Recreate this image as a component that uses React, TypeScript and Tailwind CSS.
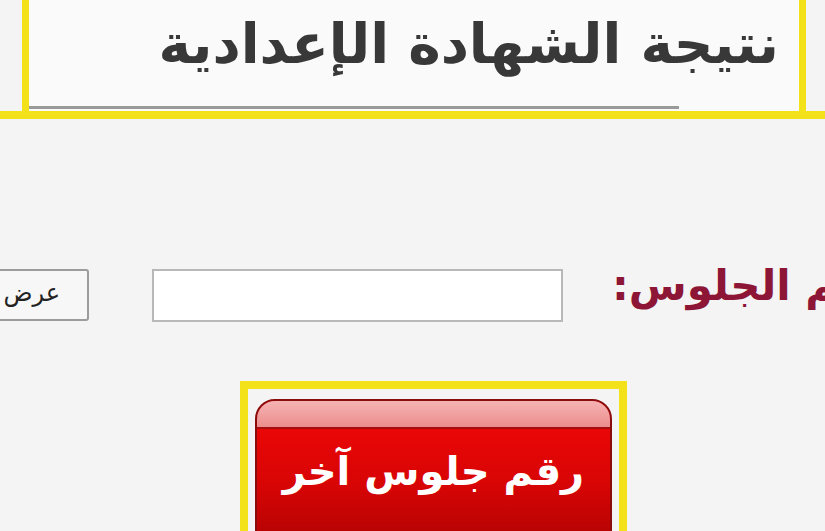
export default function App() {
  return (
    <div
      className="w-[825px] h-[531px] overflow-hidden bg-[#f4f4f4]"
      style={{ fontFamily: '"DejaVu Sans", sans-serif' }}
    >
      {/* title box */}
      <div className="border-b-[8px] border-[#f3e21a]">
        <div className="ml-[22px] mr-[19px] h-[111px] border-x-[7px] border-[#f3e21a] bg-[#fafafa] flex flex-col">
          <div dir="rtl" className="flex-1 flex items-center pr-[20px] pb-[18px]">
            <h1 className="text-[55px] leading-none font-bold text-[#383838] tracking-[-1px]">
              نتيجة الشهادة الإعدادية
            </h1>
          </div>
          <div className="h-[3px] w-[650px] bg-[#9a9a9a] mb-[2px]" />
        </div>
      </div>

      {/* seat number row */}
      <div className="mt-[149px] flex items-center h-[54px]">
        <button
          dir="rtl"
          className="-ml-[22px] shrink-0 w-[111px] h-[52px] border-2 border-[#9c9c9c] rounded-[3px] bg-[#f7f7f7] flex items-center pr-[27px] pb-[4px] text-[24px] text-[#222]"
        >
          عرض
        </button>
        <div className="ml-[63px] shrink-0 w-[411px] h-[53px] border-2 border-[#b8b8b8] bg-white" />
        <span
          dir="rtl"
          className="ml-[49px] mb-[20px] shrink-0 text-[42px] font-bold text-[#8d1636] whitespace-nowrap"
        >
          رقم الجلوس:
        </span>
      </div>

      {/* another number */}
      <div className="mt-[59px] ml-[240px] w-[387px] h-[200px] border-[8px] border-[#f3e21a] px-[7px] pt-[10px]">
        <div className="h-[170px] rounded-[20px] border-2 border-[#8a0c0c] overflow-hidden flex flex-col bg-gradient-to-b from-[#f20707] via-[#d80505] to-[#a30202]">
          <div className="h-[28px] bg-gradient-to-b from-[#f5b3b3] to-[#ec8d8d] border-b-2 border-[#a31010]" />
          <div dir="rtl" className="h-[84px] flex items-center justify-center">
            <span className="text-[40px] font-bold text-white">رقم جلوس آخر</span>
          </div>
        </div>
      </div>
    </div>
  )
}
